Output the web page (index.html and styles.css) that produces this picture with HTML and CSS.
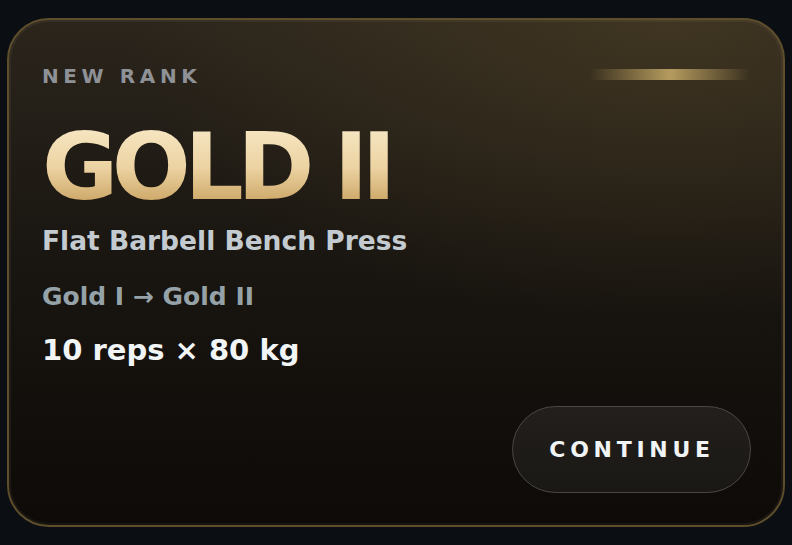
FILE: index.html
```
<!DOCTYPE html>
<html>
<head>
<meta charset="utf-8">
<link rel="stylesheet" href="styles.css">
</head>
<body>
<div class="card">
  <div class="glow-bar"></div>
  <div class="eyebrow">NEW RANK</div>
  <div class="rank">GOLD II</div>
  <div class="exercise">Flat Barbell Bench Press</div>
  <div class="progress">Gold I → Gold II</div>
  <div class="stats">10 reps × 80 kg</div>
  <div class="actions">
    <button class="btn">CONTINUE</button>
  </div>
</div>
</body>
</html>
```
FILE: styles.css
```
* { box-sizing: border-box; }
html, body {
  margin: 0;
  padding: 0;
  width: 792px;
  height: 545px;
  background: #0b0e13;
  overflow: hidden;
  font-family: "DejaVu Sans", sans-serif;
}
body {
  padding: 18px 7px;
}
.card {
  position: relative;
  width: 778px;
  height: 509px;
  border: 2px solid #5e4e2c;
  border-radius: 42px;
  padding: 46px 32px 32px 33px;
  display: flex;
  flex-direction: column;
  background:
    radial-gradient(ellipse 70% 60% at 85% 0%, rgba(80, 66, 38, 0.55) 0%, rgba(80, 66, 38, 0) 100%),
    linear-gradient(180deg, #2b251c 0%, #1a1611 45%, #0d0a08 100%);
  box-shadow: inset 0 0 0 2px rgba(255, 240, 200, 0.05);
}
.glow-bar {
  position: absolute;
  top: 49px;
  right: 33px;
  width: 160px;
  height: 11px;
  background: linear-gradient(90deg, rgba(181, 155, 94, 0) 0%, #b59b5e 50%, rgba(181, 155, 94, 0) 100%);
}
.eyebrow {
  font-size: 20px;
  line-height: 20px;
  font-weight: 700;
  letter-spacing: 4.6px;
  color: #8e9297;
}
.rank {
  margin-top: 35px;
  font-size: 93px;
  line-height: 93px;
  font-weight: 700;
  letter-spacing: -6.5px;
  background: linear-gradient(180deg, #f8e9c8 0%, #ecd3a2 50%, #c29853 100%);
  -webkit-background-clip: text;
  background-clip: text;
  color: transparent;
  align-self: flex-start;
  padding-right: 8px;
}
.exercise {
  margin-top: 14px;
  font-size: 26.5px;
  line-height: 26px;
  font-weight: 700;
  color: #c3cbd0;
}
.progress {
  margin-top: 30px;
  font-size: 25px;
  line-height: 25px;
  font-weight: 700;
  color: #95a2a8;
}
.stats {
  margin-top: 27px;
  font-size: 29px;
  line-height: 29px;
  font-weight: 700;
  color: #f2f5f6;
}
.actions {
  margin-top: auto;
  display: flex;
  justify-content: flex-end;
}
.btn {
  width: 239px;
  height: 87px;
  border-radius: 44px;
  border: 1.5px solid #4a4744;
  background: linear-gradient(180deg, #221f1c 0%, #1a1815 100%);
  color: #f0f4f5;
  font-family: "DejaVu Sans", sans-serif;
  font-size: 22px;
  font-weight: 700;
  letter-spacing: 4.7px;
  padding: 0 0 0 1px;
  cursor: pointer;
}
```
